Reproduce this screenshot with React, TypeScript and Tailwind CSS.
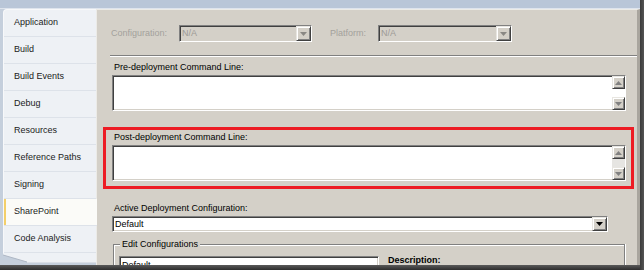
import React from "react";

const sunken =
  "border border-t-[#808080] border-l-[#808080] border-b-white border-r-white shadow-[inset_1px_1px_0_#404040,inset_-1px_-1px_0_#d4d0c8]";
const raised =
  "border border-t-[#e8e6e1] border-l-[#e8e6e1] border-b-[#404040] border-r-[#404040] shadow-[inset_1px_1px_0_#ffffff,inset_-1px_-1px_0_#808080] bg-[#d4d0c8]";

function Arrow({ up = false, color = "#808080" }: { up?: boolean; color?: string }) {
  return (
    <svg width="7" height="4" viewBox="0 0 7 4">
      {up ? (
        <polygon points="0,4 7,4 3.5,0" fill={color} />
      ) : (
        <polygon points="0,0 7,0 3.5,4" fill={color} />
      )}
    </svg>
  );
}

function Combo({
  w,
  text,
  disabled = false,
  h = "h-[17px]",
}: {
  w: string;
  text: string;
  disabled?: boolean;
  h?: string;
}) {
  return (
    <div
      className={`${w} ${h} ${sunken} flex ${
        disabled ? "bg-[#d4d0c8] text-[#9c9a96]" : "bg-white text-black"
      }`}
    >
      <div className="flex-1 flex items-center pl-[2px] leading-none">{text}</div>
      <div className={`w-[15px] ${raised} flex items-center justify-center`}>
        <Arrow color={disabled ? "#8a8884" : "#000000"} />
      </div>
    </div>
  );
}

function TextBox({ track }: { track: string }) {
  return (
    <div className={`h-[36px] ${sunken} bg-white flex justify-end`}>
      <div className="w-[13px] flex flex-col">
        <div className={`h-[13px] ${raised} flex items-center justify-center`}>
          <Arrow up />
        </div>
        <div className={`flex-1 ${track}`} />
        <div className={`h-[13px] ${raised} flex items-center justify-center`}>
          <Arrow />
        </div>
      </div>
    </div>
  );
}

const items = [
  "Application",
  "Build",
  "Build Events",
  "Debug",
  "Resources",
  "Reference Paths",
  "Signing",
  "SharePoint",
  "Code Analysis",
];

function Sidebar() {
  return (
    <div className="w-[93px] ml-[3px] flex flex-col">
      <div className="flex flex-col bg-[#eef1f5] rounded-tl-[4px] border-t border-l border-[#f7f8fa]">
        {items.map((it) => {
          const sel = it === "SharePoint";
          return (
            <div
              key={it}
              className={`h-[27px] border-b border-[#dde2e9] flex items-center pl-[10px] text-[#1b1b1b] ${
                sel
                  ? "bg-[#fbfbf8] shadow-[inset_2px_0_0_#f3cf6a] -mr-[1px] relative"
                  : ""
              }`}
            >
              {it}
            </div>
          );
        })}
      </div>
      <svg width="93" height="10" viewBox="0 0 93 10" className="block">
        <polygon points="0,0 93,0 93,9 24,9 0,2" fill="#eef1f5" />
        <line x1="0" y1="2" x2="24" y2="9" stroke="#aeb7c4" strokeWidth="1" />
        <line x1="24" y1="9.5" x2="93" y2="9.5" stroke="#d9dee6" strokeWidth="1" />
      </svg>
    </div>
  );
}

function Etched({ className = "" }: { className?: string }) {
  return <div className={`h-[2px] border-t border-[#808080] border-b border-b-white ${className}`} />;
}

export default function App() {
  return (
    <div
      className="w-[644px] h-[270px] flex overflow-hidden bg-[#c5cfdc] text-[9px]"
      style={{ fontFamily: '"Liberation Sans", Arial, sans-serif' }}
    >
      <div className="flex-1 flex flex-col min-w-0">
        <div className="h-[9px] shrink-0 bg-[#b9c6d8] border-b border-[#dee4ed]" />
        <div className="flex flex-1 min-h-0">
          <Sidebar />
          <div className="flex-1 min-w-0 flex flex-col bg-[#d4d0c8] border-l border-t border-[#ecebe7] border-r-[3px] border-r-[#a9a59e] overflow-hidden">
            {/* Row 1 */}
            <div className="flex items-center mt-[15px] ml-[14px] h-[17px] text-[#a3a19c]">
              <div className="w-[68px]">Configuration:</div>
              <Combo w="w-[133px]" text="N/A" disabled />
              <div className="w-[48px] ml-[18px]">Platform:</div>
              <Combo w="w-[134px]" text="N/A" disabled />
            </div>
            <Etched className="mt-[13px] ml-[13px]" />

            {/* Pre-deployment */}
            <div className="ml-[15px] w-[514px] mt-[4px]">
              <div className="h-[12px] leading-[12px] pl-[2px] text-black">
                Pre-deployment Command Line:
              </div>
              <div className="mt-[2px]">
                <TextBox track="bg-white" />
              </div>
            </div>

            {/* Post-deployment */}
            <div className="ml-[15px] w-[514px] mt-[20px] relative">
              <div className="h-[12px] leading-[12px] pl-[2px] text-black">
                Post-deployment Command Line:
              </div>
              <div className="mt-[2px]">
                <TextBox track="bg-[#e6e5e2]" />
              </div>
              <div className="absolute -left-[9px] -right-[8px] -top-[4px] -bottom-[8px] border-[3px] border-[#ed1c24]" />
            </div>

            {/* Active Deployment Configuration */}
            <div className="ml-[15px] mt-[21px]">
              <div className="h-[12px] leading-[12px] pl-[2px] text-black">
                Active Deployment Configuration:
              </div>
              <div className="mt-[2px]">
                <Combo w="w-[496px]" h="h-[16px]" text="Default" />
              </div>
            </div>

            {/* Edit Configurations group */}
            <div className="ml-[16px] w-[512px] mt-[12px] border-l border-r border-[#808080] shadow-[inset_1px_0_0_#ffffff,1px_0_0_#ffffff] flex-1 flex flex-col">
              <div className="-mt-[6px] h-[12px] flex">
                <div className="w-[6px] self-start mt-[6px] h-[2px] border-t border-[#808080] border-b border-b-white" />
                <div className="px-[2px] leading-[12px] text-black">Edit Configurations</div>
                <div className="flex-1 self-start mt-[6px] h-[2px] border-t border-[#808080] border-b border-b-white" />
              </div>
              <div className="flex items-start">
                <div className={`ml-[5px] mt-[6px] w-[260px] h-[40px] bg-white ${sunken} pl-[2px] pt-[2px] leading-[12px] text-black`}>
                  Default
                </div>
                <div className="ml-[9px] mt-[4px] leading-[12px] font-bold text-black">
                  Description:
                </div>
              </div>
            </div>
          </div>
        </div>
        <div className="h-[5px] shrink-0 bg-gradient-to-b from-[#5a5a5a] to-[#2e2e2e]" />
      </div>
      <div className="w-[4px] shrink-0 bg-gradient-to-r from-[#3a3a3a] to-[#555555]" />
    </div>
  );
}
